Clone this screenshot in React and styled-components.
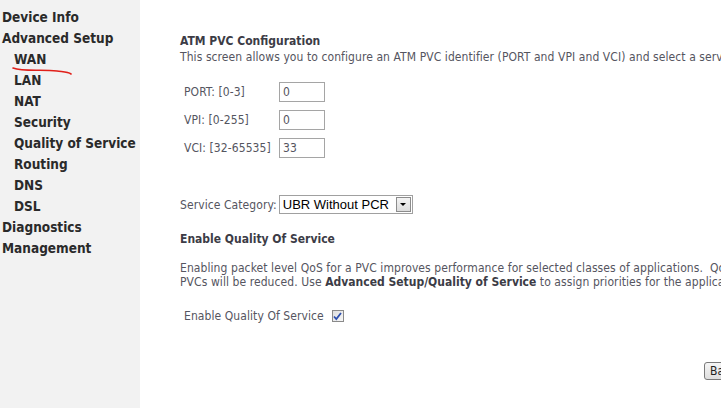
import React from "react";
import styled, { createGlobalStyle } from "styled-components";

const Global = createGlobalStyle`
  html, body { margin: 0; padding: 0; background: #fff; overflow: hidden; }
  body { font-family: "DejaVu Sans Condensed", "DejaVu Sans", sans-serif; }
`;

const Page = styled.div`
  display: flex;
  width: 721px;
  height: 408px;
  position: relative;
  overflow: hidden;
`;

const Sidebar = styled.nav`
  flex: 0 0 140px;
  background: #f2f2f2;
  padding-top: 7px;
  box-sizing: border-box;
`;

const NavItem = styled.div`
  font-family: "DejaVu Sans Condensed", "DejaVu Sans", sans-serif;
  font-weight: bold;
  font-size: 13.5px;
  line-height: 21px;
  color: #2a2a2a;
  padding-left: ${(p) => (p.$sub ? 14 : 2)}px;
  white-space: nowrap;
`;

const Main = styled.main`
  flex: 1 0 auto;
  padding: 33px 0 0 40px;
  color: #555560;
  font-size: 12px;
  letter-spacing: 0.08px;
  white-space: nowrap;
`;

const Heading = styled.div`
  font-weight: bold;
  font-size: 12px;
  line-height: 16px;
  letter-spacing: 0;
  color: #3c3c46;
  margin-top: ${(p) => p.$mt || 0}px;
`;

const Text = styled.div`
  line-height: ${(p) => p.$lh || 16}px;
  margin-top: ${(p) => p.$mt || 0}px;
  b { color: #3c3c46; letter-spacing: 0; }
`;

const FormTable = styled.div`
  display: grid;
  grid-template-columns: 95px 46px;
  row-gap: 8px;
  margin-top: 17px;
  padding-left: 4px;
  align-items: center;
`;

const Label = styled.span`
  line-height: 20px;
`;

const Field = styled.div`
  height: 18px;
  width: 41px;
  border: 1px solid #a5a5a5;
  background: #fff;
  font-size: 12px;
  line-height: 18px;
  padding-left: 3px;
  color: #555560;
`;

const SelectRow = styled.div`
  display: flex;
  align-items: center;
  margin-top: 37px;
  gap: 2px;
`;

const Select = styled.div`
  display: flex;
  align-items: center;
  height: 17px;
  border: 1px solid #a0a0a0;
  background: #fff;
  padding: 0 1px 0 3px;
  font-family: "Liberation Sans", Arial, sans-serif;
  font-size: 13px;
  letter-spacing: 0;
  color: #000;
  gap: 7px;
`;

const DropBtn = styled.span`
  width: 15px;
  height: 15px;
  box-sizing: border-box;
  border: 1px solid #8c8c8c;
  background: linear-gradient(#f4f4f4, #dcdcdc);
  display: flex;
  align-items: center;
  justify-content: center;
  &::after {
    content: "";
    border-left: 3px solid transparent;
    border-right: 3px solid transparent;
    border-top: 3px solid #000;
  }
`;

const CheckRow = styled.div`
  display: flex;
  align-items: center;
  gap: 8px;
  padding-left: 4px;
  margin-top: 19px;
  line-height: 16px;
`;

const Check = styled.span`
  width: 12px;
  height: 12px;
  box-sizing: border-box;
  border: 1px solid #8a8a8a;
  background: linear-gradient(135deg, #dedede, #f7f7f7);
  display: flex;
  align-items: center;
  justify-content: center;
`;

const ButtonRow = styled.div`
  margin-top: 38px;
  padding-left: 524px;
`;

const Button = styled.span`
  display: inline-block;
  height: 18px;
  line-height: 16px;
  box-sizing: border-box;
  border: 1px solid #7a7a7a;
  border-radius: 3px;
  background: linear-gradient(#f6f6f6, #dedede);
  padding: 0 6px 0 5px;
  font-size: 12px;
  color: #222;
`;

const Scribble = styled.svg`
  position: absolute;
  left: 12px;
  top: 64px;
`;

const nav = [
  ["Device Info", false],
  ["Advanced Setup", false],
  ["WAN", true],
  ["LAN", true],
  ["NAT", true],
  ["Security", true],
  ["Quality of Service", true],
  ["Routing", true],
  ["DNS", true],
  ["DSL", true],
  ["Diagnostics", false],
  ["Management", false],
];

export default function App() {
  return (
    <>
      <Global />
      <Page>
        <Sidebar>
          {nav.map(([t, s]) => (
            <NavItem key={t} $sub={s}>
              {t}
            </NavItem>
          ))}
        </Sidebar>
        <Main>
          <Heading>ATM PVC Configuration</Heading>
          <Text>
            This screen allows you to configure an ATM PVC identifier (PORT and VPI and VCI) and select a service category. Otherwise choose an existing interface by selecting the checkbox to enable it.
          </Text>
          <FormTable>
            <Label>PORT: [0-3]</Label>
            <Field>0</Field>
            <Label>VPI: [0-255]</Label>
            <Field>0</Field>
            <Label>VCI: [32-65535]</Label>
            <Field>33</Field>
          </FormTable>
          <SelectRow>
            <span>Service Category:</span>
            <Select>
              UBR Without PCR
              <DropBtn />
            </Select>
          </SelectRow>
          <Heading $mt={17}>Enable Quality Of Service</Heading>
          <Text $lh={14} $mt={14}>
            Enabling packet level QoS for a PVC improves performance for selected classes of applications.&nbsp; QoS cannot be set for CBR and Realtime VBR. QoS consumes system resources; therefore the number of
          </Text>
          <Text $lh={14}>
            PVCs will be reduced. Use <b>Advanced Setup/Quality of Service</b> to assign priorities for the applications.
          </Text>
          <CheckRow>
            <span>Enable Quality Of Service</span>
            <Check>
              <svg width="9" height="9" viewBox="0 0 9 9">
                <path d="M1 4.5 L3.3 7 L8 1" fill="none" stroke="#2d4fae" strokeWidth="1.8" />
              </svg>
            </Check>
          </CheckRow>
          <ButtonRow>
            <Button>Back</Button>
          </ButtonRow>
        </Main>
        <Scribble width="62" height="14" viewBox="0 0 62 14">
          <path d="M1 4 C 12 8, 30 5, 45 7 C 52 8, 56 8, 59 10" fill="none" stroke="#e0201a" strokeWidth="1.6" strokeLinecap="round" />
        </Scribble>
      </Page>
    </>
  );
}
